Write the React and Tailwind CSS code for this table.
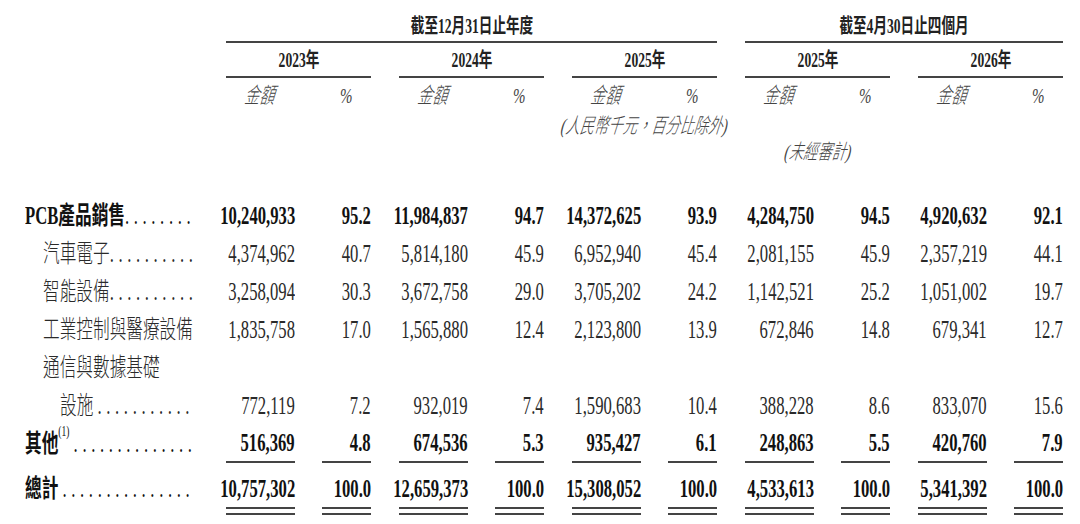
import React from "react";

// Condensed Times look: Liberation Serif squeezed horizontally
const FONT = "font-['Liberation_Serif','Noto_Sans_CJK_TC',serif]";
const sqNum = "inline-block shrink-0 whitespace-nowrap origin-right scale-x-[0.68] leading-none";
const sqLabel = "inline-block shrink-0 whitespace-nowrap origin-left scale-x-[0.68] leading-none";
const sqMid = "inline-block shrink-0 whitespace-nowrap origin-center scale-x-[0.68] leading-none";
const sqItal = "inline-block shrink-0 whitespace-nowrap origin-center scale-x-[0.68] -skew-x-[12deg] leading-none";

const rows = [
  {
    label: "PCB產品銷售",
    dots: 8,
    bold: true,
    indent: "pl-[25px]",
    values: [
      ["10,240,933", "95.2"],
      ["11,984,837", "94.7"],
      ["14,372,625", "93.9"],
      ["4,284,750", "94.5"],
      ["4,920,632", "92.1"],
    ],
  },
  {
    label: "汽車電子",
    dots: 10,
    indent: "pl-[43px]",
    values: [
      ["4,374,962", "40.7"],
      ["5,814,180", "45.9"],
      ["6,952,940", "45.4"],
      ["2,081,155", "45.9"],
      ["2,357,219", "44.1"],
    ],
  },
  {
    label: "智能設備",
    dots: 10,
    indent: "pl-[43px]",
    values: [
      ["3,258,094", "30.3"],
      ["3,672,758", "29.0"],
      ["3,705,202", "24.2"],
      ["1,142,521", "25.2"],
      ["1,051,002", "19.7"],
    ],
  },
  {
    label: "工業控制與醫療設備",
    dots: 0,
    indent: "pl-[43px]",
    values: [
      ["1,835,758", "17.0"],
      ["1,565,880", "12.4"],
      ["2,123,800", "13.9"],
      ["672,846", "14.8"],
      ["679,341", "12.7"],
    ],
  },
  {
    label: "通信與數據基礎",
    dots: 0,
    indent: "pl-[43px]",
    values: null,
  },
  {
    label: "設施 ",
    dots: 11,
    indent: "pl-[60px]",
    values: [
      ["772,119", "7.2"],
      ["932,019", "7.4"],
      ["1,590,683", "10.4"],
      ["388,228", "8.6"],
      ["833,070", "15.6"],
    ],
  },
  {
    label: "其他",
    note: "(1)",
    dots: 14,
    bold: true,
    underline: true,
    indent: "pl-[25px]",
    values: [
      ["516,369", "4.8"],
      ["674,536", "5.3"],
      ["935,427", "6.1"],
      ["248,863", "5.5"],
      ["420,760", "7.9"],
    ],
  },
];

const total = [
  ["10,757,302", "100.0"],
  ["12,659,373", "100.0"],
  ["15,308,052", "100.0"],
  ["4,533,613", "100.0"],
  ["5,341,392", "100.0"],
];

function Dots({ n }) {
  if (!n) return null;
  return <span className="font-normal tracking-[6.8px]">{".".repeat(n)}</span>;
}

function Label({ row }) {
  return (
    <div className={`w-[226px] shrink-0 flex ${row.indent}`}>
      <span className={`${sqLabel} ${row.bold ? "font-bold text-[#111]" : "font-light text-[#2a2a2a]"}`}>
        {row.label}
        {row.note && <sup className="text-[14px] font-normal align-[9px]">{row.note}</sup>}
        {row.note && " "}
        <Dots n={row.dots} />
      </span>
    </div>
  );
}

function Num({ children, bold, className = "" }) {
  return (
    <div className={`flex justify-end ${className}`}>
      <span className={`${sqNum} ${bold ? "font-bold text-[#111]" : "text-[#2a2a2a]"}`}>{children}</span>
    </div>
  );
}

export default function App() {
  return (
    <div className={`w-[1080px] h-[524px] bg-white overflow-hidden ${FONT} text-[#222]`}>
      {/* Period headings */}
      <div className="flex">
        <div className="w-[226px] shrink-0" />
        <div className="flex gap-[28px]">
          <div className="w-[491px] h-[43px] pt-[11px] border-b-2 border-[#444] flex items-center justify-center">
            <span className={`${sqMid} text-[20px] font-bold`}>截至12月31日止年度</span>
          </div>
          <div className="w-[318px] h-[43px] pt-[11px] border-b-2 border-[#444] flex items-center justify-center">
            <span className={`${sqMid} text-[20px] font-bold`}>截至4月30日止四個月</span>
          </div>
        </div>
      </div>

      {/* Years */}
      <div className="flex">
        <div className="w-[226px] shrink-0" />
        <div className="flex gap-[28px]">
          {["2023年", "2024年", "2025年", "2025年", "2026年"].map((y, i) => (
            <div key={i} className="w-[145px] h-[35px] border-b-2 border-[#444] flex items-center justify-center">
              <span className={`${sqMid} text-[20px] font-bold`}>{y}</span>
            </div>
          ))}
        </div>
      </div>

      {/* Column captions */}
      <div className="flex">
        <div className="w-[226px] shrink-0" />
        <div className="flex gap-[28px]">
          {[0, 1, 2, 3, 4].map((i) => (
            <div key={i} className="w-[145px] h-[36px] flex justify-between items-center text-[#444] italic">
              <div className="w-[69px] flex justify-center">
                <span className={`${sqItal} text-[22px] font-light`}>金額</span>
              </div>
              <div className="w-[49px] flex justify-center">
                <span className={`${sqMid} text-[22px]`}>%</span>
              </div>
            </div>
          ))}
        </div>
      </div>

      <div className="flex">
        <div className="w-[226px] shrink-0" />
        <div className="flex gap-[28px]">
          <div className="w-[145px]" />
          <div className="w-[145px]" />
          <div className="w-[145px] h-[24px] flex items-center justify-center text-[#444] italic">
            <span className={`${sqItal} text-[21px] font-light`}>(人民幣千元，百分比除外)</span>
          </div>
        </div>
      </div>

      <div className="flex">
        <div className="w-[226px] shrink-0" />
        <div className="flex gap-[28px]">
          <div className="w-[145px]" />
          <div className="w-[145px]" />
          <div className="w-[145px]" />
          <div className="w-[145px] h-[28px] flex items-center justify-center text-[#444] italic">
            <span className={`${sqItal} text-[21px] font-light`}>(未經審計)</span>
          </div>
        </div>
      </div>

      {/* Body */}
      <div className="mt-[31px] text-[24.5px]">
        {rows.map((row, r) => (
          <div key={r} className="flex h-[38px]">
            <div className="flex items-center">
              <Label row={row} />
            </div>
            {row.values && (
              <div className="flex gap-[28px]">
                {row.values.map(([amt, pct], i) => (
                  <div key={i} className="w-[145px] flex justify-between">
                    <Num bold={row.bold} className={`w-[69px] items-center ${row.underline ? "border-b-2 border-[#444]" : ""}`}>
                      {amt}
                    </Num>
                    <Num bold={row.bold} className={`w-[49px] items-center ${row.underline ? "border-b-2 border-[#444]" : ""}`}>
                      {pct}
                    </Num>
                  </div>
                ))}
              </div>
            )}
          </div>
        ))}

        {/* Total */}
        <div className="flex">
          <div className="h-[44px] pt-[8px] flex items-center">
            <Label row={{ label: "總計 ", dots: 15, bold: true, indent: "pl-[25px]" }} />
          </div>
          <div className="flex gap-[28px]">
            {total.map(([amt, pct], i) => (
              <div key={i} className="w-[145px] flex justify-between">
                <div className="w-[69px] flex flex-col">
                  <Num bold className="h-[44px] pt-[8px] items-center">{amt}</Num>
                  <div className="h-[8px] border-y-2 border-[#444]" />
                </div>
                <div className="w-[49px] flex flex-col">
                  <Num bold className="h-[44px] pt-[8px] items-center">{pct}</Num>
                  <div className="h-[8px] border-y-2 border-[#444]" />
                </div>
              </div>
            ))}
          </div>
        </div>
      </div>
    </div>
  );
}
